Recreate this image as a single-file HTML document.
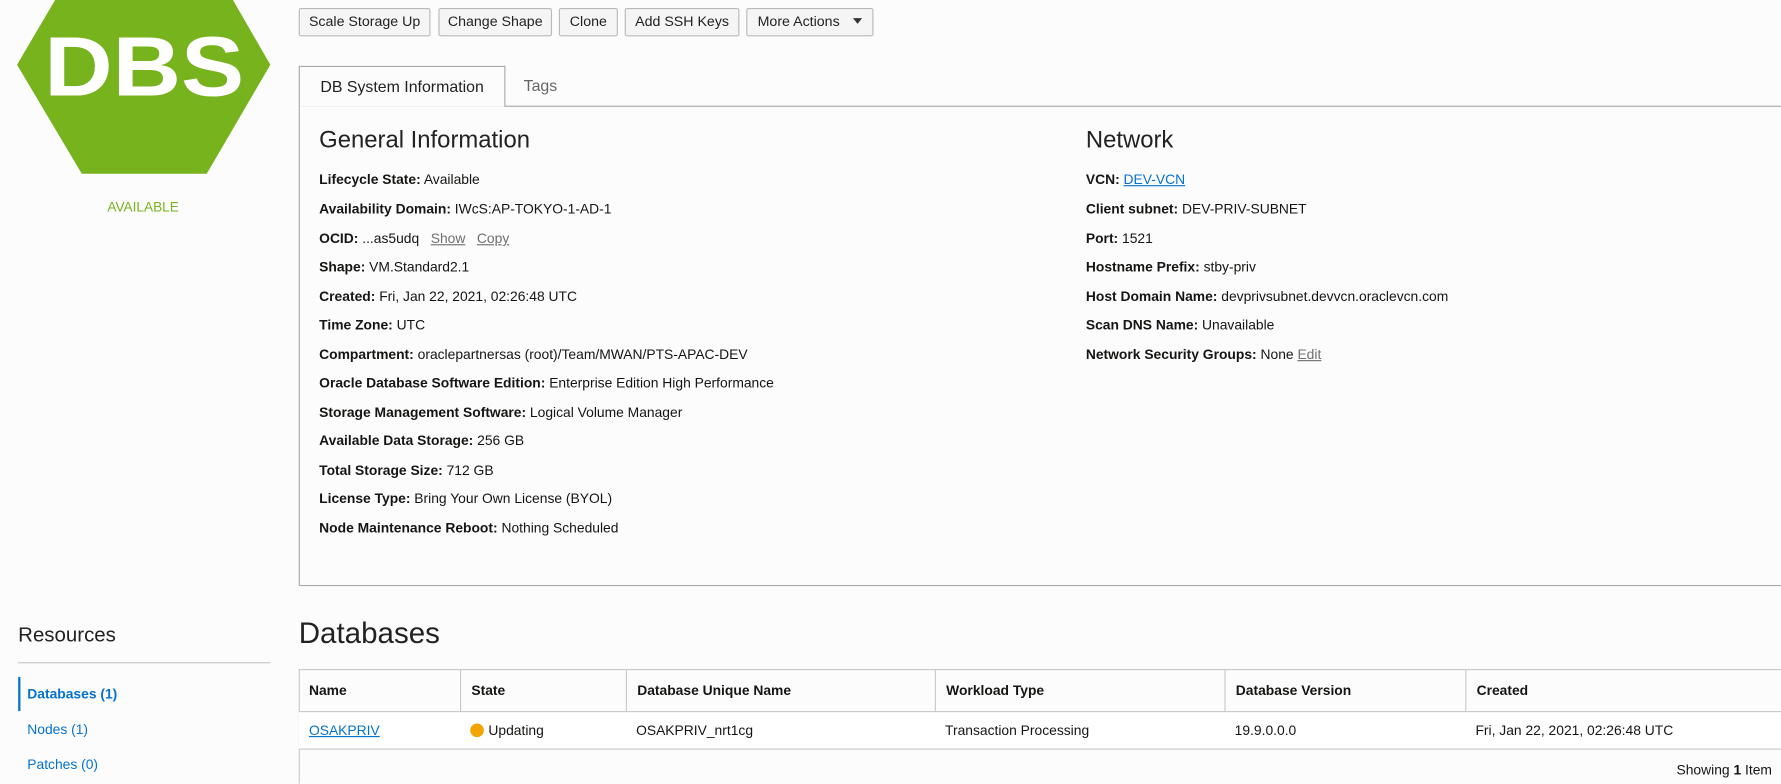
<!DOCTYPE html>
<html><head><meta charset="utf-8"><style>
*{box-sizing:border-box;margin:0;padding:0}
html,body{width:1781px;height:784px;overflow:hidden;background:#fcfcfc}
body{font-family:"Liberation Sans",Arial,sans-serif;color:#161513;font-size:12px}
#w{position:absolute;left:0;top:0;width:1568px;height:690px;transform:scale(1.13584);transform-origin:0 0;overflow:hidden}
.a{position:absolute;white-space:nowrap}
.btn{position:absolute;top:7px;height:25px;border:1px solid #b9b9b9;border-radius:2px;background:#f5f5f5;font-size:12.5px;line-height:23px;text-align:center;color:#222}
.row{position:absolute;font-size:12.2px;line-height:14px;white-space:nowrap}
.lnk{color:#0572ce;text-decoration:underline}
.gl{color:#6f6f6f;text-decoration:underline}
.th{position:absolute;top:590px;height:36px;line-height:36px;font-weight:bold;font-size:12.2px;padding-left:9px;border-left:1px solid #c9c9c9}
.td{position:absolute;top:627px;height:32px;line-height:32px;font-size:12.2px;padding-left:9px}
</style></head><body><div id="w">
<svg class="a" style="left:0;top:0" width="250" height="160"><polygon points="15,57 72,-40 182,-40 238,57 182,153 72,153" fill="#76b31c"/><text x="127" y="84" text-anchor="middle" font-family="Liberation Sans,Arial,sans-serif" font-weight="bold" font-size="74" fill="#fff" textLength="176" lengthAdjust="spacingAndGlyphs">DBS</text></svg>
<div class="a" style="left:0;width:252px;top:175px;text-align:center;color:#76b31c;font-size:12px">AVAILABLE</div>

<div class="btn" style="left:263px;width:116px">Scale Storage Up</div>
<div class="btn" style="left:386px;width:100px">Change Shape</div>
<div class="btn" style="left:492px;width:52px">Clone</div>
<div class="btn" style="left:550px;width:101px">Add SSH Keys</div>
<div class="btn" style="left:657px;width:112px;text-align:left;padding-left:9px">More Actions <span style="display:inline-block;margin-left:8px;width:0;height:0;border-left:4px solid transparent;border-right:4px solid transparent;border-top:5px solid #333;vertical-align:2px"></span></div>

<div class="a" style="left:263px;top:93px;width:1320px;height:423px;border:1px solid #aaa;background:#fcfcfc"></div>
<div class="a" style="left:263px;top:58px;width:182px;height:36px;border:1px solid #aaa;border-bottom:none;background:#fcfcfc;font-size:14px;line-height:34px;text-align:center;color:#222">DB System Information</div>
<div class="a" style="left:461px;top:67px;font-size:14px;color:#666">Tags</div>

<div class="a" style="left:281px;top:112px;font-size:21px;color:#222">General Information</div>
<div class="row" style="left:281px;top:151px"><b>Lifecycle State:</b> Available</div>
<div class="row" style="left:281px;top:177px"><b>Availability Domain:</b> IWcS:AP-TOKYO-1-AD-1</div>
<div class="row" style="left:281px;top:203px"><b>OCID:</b> ...as5udq &nbsp; <span class="gl">Show</span> &nbsp; <span class="gl">Copy</span></div>
<div class="row" style="left:281px;top:228px"><b>Shape:</b> VM.Standard2.1</div>
<div class="row" style="left:281px;top:254px"><b>Created:</b> Fri, Jan 22, 2021, 02:26:48 UTC</div>
<div class="row" style="left:281px;top:279px"><b>Time Zone:</b> UTC</div>
<div class="row" style="left:281px;top:305px"><b>Compartment:</b> oraclepartnersas (root)/Team/MWAN/PTS-APAC-DEV</div>
<div class="row" style="left:281px;top:330px"><b>Oracle Database Software Edition:</b> Enterprise Edition High Performance</div>
<div class="row" style="left:281px;top:356px"><b>Storage Management Software:</b> Logical Volume Manager</div>
<div class="row" style="left:281px;top:381px"><b>Available Data Storage:</b> 256 GB</div>
<div class="row" style="left:281px;top:407px"><b>Total Storage Size:</b> 712 GB</div>
<div class="row" style="left:281px;top:432px"><b>License Type:</b> Bring Your Own License (BYOL)</div>
<div class="row" style="left:281px;top:458px"><b>Node Maintenance Reboot:</b> Nothing Scheduled</div>

<div class="a" style="left:956px;top:112px;font-size:21px;color:#222">Network</div>
<div class="row" style="left:956px;top:151px"><b>VCN:</b> <span class="lnk">DEV-VCN</span></div>
<div class="row" style="left:956px;top:177px"><b>Client subnet:</b> DEV-PRIV-SUBNET</div>
<div class="row" style="left:956px;top:203px"><b>Port:</b> 1521</div>
<div class="row" style="left:956px;top:228px"><b>Hostname Prefix:</b> stby-priv</div>
<div class="row" style="left:956px;top:254px"><b>Host Domain Name:</b> devprivsubnet.devvcn.oraclevcn.com</div>
<div class="row" style="left:956px;top:279px"><b>Scan DNS Name:</b> Unavailable</div>
<div class="row" style="left:956px;top:305px"><b>Network Security Groups:</b> None <span class="gl">Edit</span></div>

<div class="a" style="left:16px;top:549px;font-size:18px;color:#222">Resources</div>
<div class="a" style="left:16px;top:583px;width:222px;border-top:1px solid #c5c5c5"></div>
<div class="a" style="left:16px;top:596px;width:2px;height:30px;background:#0572ce"></div>
<div class="a" style="left:24px;top:604px;font-size:12.2px;font-weight:bold;color:#0572ce">Databases (1)</div>
<div class="a" style="left:24px;top:635px;font-size:12.2px;color:#0572ce">Nodes (1)</div>
<div class="a" style="left:24px;top:666px;font-size:12.2px;color:#0572ce">Patches (0)</div>

<div class="a" style="left:263px;top:542px;font-size:26px;color:#222">Databases</div>
<div class="a" style="left:263px;top:589px;width:1320px;height:101px;border-left:1px solid #c9c9c9;border-top:1px solid #c9c9c9;background:#fcfcfc"></div>
<div class="a" style="left:263px;top:626px;width:1320px;height:34px;background:#fff;border-top:1px solid #c9c9c9;border-bottom:1px solid #c9c9c9"></div>
<div class="th" style="left:263px;border-left:none">Name</div>
<div class="th" style="left:405px">State</div>
<div class="th" style="left:551px">Database Unique Name</div>
<div class="th" style="left:823px">Workload Type</div>
<div class="th" style="left:1078px">Database Version</div>
<div class="th" style="left:1290px">Created</div>
<div class="td" style="left:263px"><span class="lnk">OSAKPRIV</span></div>
<div class="td" style="left:405px"><span style="display:inline-block;width:12px;height:12px;border-radius:50%;background:#f0a500;vertical-align:-2px;margin-right:4px"></span>Updating</div>
<div class="td" style="left:551px">OSAKPRIV_nrt1cg</div>
<div class="td" style="left:823px">Transaction Processing</div>
<div class="td" style="left:1078px">19.9.0.0.0</div>
<div class="td" style="left:1290px">Fri, Jan 22, 2021, 02:26:48 UTC</div>
<div class="a" style="left:1476px;top:671px;font-size:12.2px">Showing <b>1</b> Item</div>
</div></body></html>
